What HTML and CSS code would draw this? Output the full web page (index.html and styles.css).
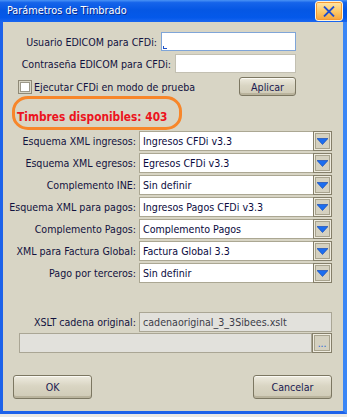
FILE: index.html
```html
<!DOCTYPE html>
<html lang="es">
<head>
    <meta charset="UTF-8">
    <title>Parámetros de Timbrado</title>
    <link rel="stylesheet" href="styles.css">
</head>
<body>
<div class="window">
    <div class="titlebar">
        <span class="title">Parámetros de Timbrado</span>
        <span class="close">
            <svg width="12" height="11" viewBox="0 0 12 11"><path d="M1 0.5 L11 10.5 M11 0.5 L1 10.5" stroke="#1f4fd0" stroke-width="1.8" fill="none"/></svg>
        </span>
    </div>
    <div class="frame">
        <div class="login">
            <div class="login-row">
                <label>Usuario EDICOM para CFDi:</label>
                <span class="textbox user focused"><span class="caret"></span></span>
            </div>
            <div class="login-row">
                <label>Contraseña EDICOM para CFDi:</label>
                <span class="textbox pass"></span>
            </div>
            <div class="test-row">
                <span class="check"><span class="check-box"></span>Ejecutar CFDi en modo de prueba</span>
                <span class="btn btn-small">Aplicar</span>
            </div>
        </div>

        <!-- contador resaltado -->
        <div class="stamps"><span>Timbres disponibles: 403</span></div>

        <div class="fields">
            <label>Esquema XML ingresos:</label>
            <div class="combo"><span class="value">Ingresos CFDi v3.3</span><span class="drop"><svg width="11" height="7" viewBox="0 0 11 7"><path d="M0 0.5 H11 L5.5 6.5 Z" fill="#1c6ef0" stroke="#0b3fb0" stroke-width="0.6"/></svg></span></div>
            <label>Esquema XML egresos:</label>
            <div class="combo"><span class="value">Egresos CFDi v3.3</span><span class="drop"><svg width="11" height="7" viewBox="0 0 11 7"><path d="M0 0.5 H11 L5.5 6.5 Z" fill="#1c6ef0" stroke="#0b3fb0" stroke-width="0.6"/></svg></span></div>
            <label>Complemento INE:</label>
            <div class="combo"><span class="value">Sin definir</span><span class="drop"><svg width="11" height="7" viewBox="0 0 11 7"><path d="M0 0.5 H11 L5.5 6.5 Z" fill="#1c6ef0" stroke="#0b3fb0" stroke-width="0.6"/></svg></span></div>
            <label>Esquema XML para pagos:</label>
            <div class="combo"><span class="value">Ingresos Pagos CFDi v3.3</span><span class="drop"><svg width="11" height="7" viewBox="0 0 11 7"><path d="M0 0.5 H11 L5.5 6.5 Z" fill="#1c6ef0" stroke="#0b3fb0" stroke-width="0.6"/></svg></span></div>
            <label>Complemento Pagos:</label>
            <div class="combo"><span class="value">Complemento Pagos</span><span class="drop"><svg width="11" height="7" viewBox="0 0 11 7"><path d="M0 0.5 H11 L5.5 6.5 Z" fill="#1c6ef0" stroke="#0b3fb0" stroke-width="0.6"/></svg></span></div>
            <label>XML para Factura Global:</label>
            <div class="combo"><span class="value">Factura Global 3.3</span><span class="drop"><svg width="11" height="7" viewBox="0 0 11 7"><path d="M0 0.5 H11 L5.5 6.5 Z" fill="#1c6ef0" stroke="#0b3fb0" stroke-width="0.6"/></svg></span></div>
            <label>Pago por terceros:</label>
            <div class="combo"><span class="value">Sin definir</span><span class="drop"><svg width="11" height="7" viewBox="0 0 11 7"><path d="M0 0.5 H11 L5.5 6.5 Z" fill="#1c6ef0" stroke="#0b3fb0" stroke-width="0.6"/></svg></span></div>
        </div>

        <div class="fields xslt">
            <label>XSLT cadena original:</label>
            <span class="readonly">cadenaoriginal_3_3Sibees.xslt</span>
        </div>
        <div class="path-row">
            <span class="readonly"></span>
            <span class="drop dots">...</span>
        </div>

        <div class="actions">
            <span class="btn btn-big">OK</span>
            <span class="btn btn-big">Cancelar</span>
        </div>
    </div>
</div>
</body>
</html>
```

FILE: styles.css
```css
*{
    margin: 0;
    padding: 0;
    box-sizing: border-box;
}
body{
    background: #e9e9e6;
    font-family: "DejaVu Sans Condensed", "Liberation Sans", sans-serif;
    font-size: 10.6px;
    color: #12123e;
}
.window{
    width: 347px;
    height: 414px;
    display: flex;
    flex-direction: column;
}
.titlebar{
    height: 22px;
    display: flex;
    align-items: flex-start;
    justify-content: space-between;
    padding: 0 4px 0 7px;
    background: linear-gradient(#4a93f5 0%, #1664ea 12%, #0557e4 45%, #0459ea 80%, #1a66f0 100%);
}
.title{
    color: #fff;
    font-size: 10.8px;
    line-height: 22px;
    text-shadow: 1px 1px 0 #0b2a8a;
}
.close{
    width: 28px;
    height: 20px;
    margin-top: 1px;
    border: 1px solid #fff4dc;
    border-radius: 3px;
    background: linear-gradient(#ffe7a8, #fbc766 55%, #f6a43a);
    box-shadow: inset 0 0 0 1px #f59a35;
    display: flex;
    align-items: center;
    justify-content: center;
}
.frame{
    flex: 1;
    background: #d8d5c5;
    border-left: 3px solid #1d62ea;
    border-right: 4px solid #3a86f6;
    border-bottom: 3px solid #1d62ea;
    padding-top: 10px;
}
/* usuario / contrasena */
.login{
    padding: 0 47px 0 15px;
}
.login-row{
    display: flex;
    justify-content: flex-end;
    align-items: center;
    gap: 4px;
    height: 19px;
    margin-bottom: 3px;
    white-space: nowrap;
}
.textbox{
    height: 19px;
    background: #fff;
    border: 1px solid #c3c0b2;
    position: relative;
}
.textbox.user{
    width: 135px;
}
.textbox.pass{
    width: 121px;
}
.textbox.focused{
    border-color: #7fa5d8;
}
.caret{
    position: absolute;
    left: 1px;
    bottom: 1px;
    width: 4px;
    height: 3px;
    border-left: 1px solid #1c52c8;
    border-bottom: 1px solid #1c52c8;
}
.test-row{
    display: flex;
    justify-content: space-between;
    align-items: center;
    height: 19px;
    margin-top: 4px;
    white-space: nowrap;
}
.check{
    display: flex;
    align-items: center;
    gap: 2px;
}
.check-box{
    width: 14px;
    height: 14px;
    background: #fff;
    border: 1px solid #8e8977;
    box-shadow: inset 0 0 0 1px #d8d5c5, inset 0 0 0 2px #9d998a;
}
.btn{
    display: flex;
    align-items: center;
    justify-content: center;
    border: 1px solid #7c7762;
    border-radius: 3px;
    background: linear-gradient(#eeebdf, #d9d5c3 45%, #cfcab6);
    box-shadow: inset 0 -2px 0 #b9b39c, inset 0 1px 0 #fbfaf4;
    color: #1a1a52;
}
.btn-small{
    width: 57px;
    height: 19px;
}
.btn-big{
    width: 79px;
    height: 24px;
}
.stamps{
    width: 170px;
    height: 34px;
    margin-left: 9px;
    border: 3px solid #f7862a;
    border-radius: 16px / 15px;
    padding: 11px 0 0 2px;
    color: #ec1320;
    font-weight: bold;
    font-size: 11.8px;
    line-height: 15px;
    white-space: nowrap;
}
/* combos */
.fields{
    display: grid;
    grid-template-columns: 1fr 193px;
    grid-auto-rows: 20px;
    column-gap: 3px;
    row-gap: 2px;
    margin-top: 1px;
    padding: 0 11px 0 0;
}
.fields label{
    text-align: right;
    line-height: 20px;
    white-space: nowrap;
}
.combo{
    display: flex;
    border: 1px solid #aba793;
    background: #fff;
}
.value{
    flex: 1;
    padding-left: 3px;
    line-height: 18px;
    color: #0a0a40;
}
.drop{
    width: 19px;
    margin: -1px -1px -1px 0;
    border: 1px solid #857f6a;
    box-shadow: inset 0 0 0 1px #efece0, inset 0 0 0 2px #a8a38e;
    background: #d5d1c0;
    display: flex;
    align-items: center;
    justify-content: center;
}
.xslt{
    margin-top: 29px;
}
.readonly{
    height: 20px;
    background: #e2e1dc;
    border: 1px solid #aaa695;
    padding-left: 3px;
    line-height: 18px;
    color: #3c3c48;
}
.path-row{
    display: flex;
    height: 20px;
    margin: 1px 11px 0 16px;
}
.path-row .readonly{
    flex: 1;
}
.dots{
    width: 20px;
    margin: 0;
    color: #1f5fd8;
    font-size: 10px;
    line-height: 10px;
    padding-top: 2px;
}
.actions{
    display: flex;
    justify-content: space-between;
    margin-top: 22px;
    padding: 0 11px 0 10px;
}
```
